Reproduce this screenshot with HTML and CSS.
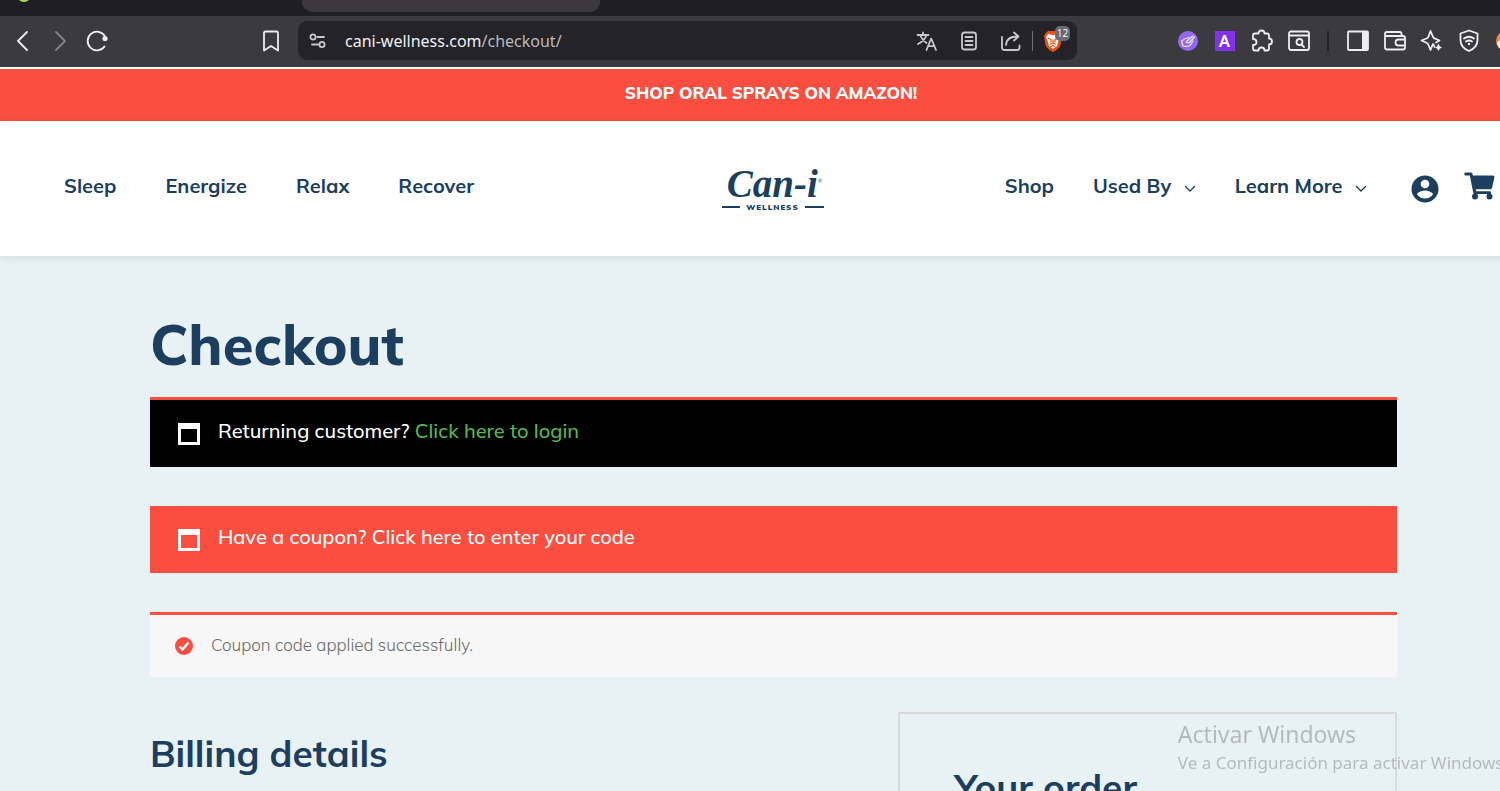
FILE: index.html
```html
<!DOCTYPE html>
<html lang="en">
<head>
    <meta charset="UTF-8">
    <meta name="viewport" content="width=device-width, initial-scale=1.0">
    <title>Checkout - Cani Wellness</title>
    <link rel="stylesheet" href="styles.css">
</head>
<body>
<div class="window">
    <!-- Browser chrome -->
    <div class="tab-strip">
        <span class="tab-favicon"></span>
        <span class="active-tab"></span>
    </div>
    <div class="toolbar">
        <div class="toolbar-nav">
            <button class="tool-btn" aria-label="Back">
                <svg width="24" height="24" viewBox="0 0 24 24"><path d="M16 3 L7 12 L16 21"/></svg>
            </button>
            <button class="tool-btn dim" aria-label="Forward">
                <svg width="24" height="24" viewBox="0 0 24 24"><path d="M8 3 L17 12 L8 21"/></svg>
            </button>
            <button class="tool-btn" aria-label="Reload">
                <svg width="24" height="24" viewBox="0 0 24 24"><path d="M19.500 17.500 A9.300 9.300 0 1 1 19.800 7"/><circle class="solid" cx="20" cy="9.500" r="2.600"/></svg>
            </button>
            <button class="tool-btn bookmark" aria-label="Bookmark">
                <svg width="24" height="24" viewBox="0 0 24 24"><path d="M5 4 Q5 2.500 6.500 2.500 H17.500 Q19 2.500 19 4 V21.500 L12 17 L5 21.500 Z"/></svg>
            </button>
        </div>
        <div class="url-bar">
            <button class="url-btn" aria-label="Site settings">
                <svg width="20" height="20" viewBox="0 0 20 20"><circle cx="5" cy="6" r="2.600"/><path d="M9.500 6 H16 M4 13.500 H10.500"/><circle cx="14" cy="13.500" r="2.600"/></svg>
            </button>
            <div class="url-text">cani-wellness.com<span>/checkout/</span></div>
            <button class="url-btn" aria-label="Translate">
                <svg width="22" height="22" viewBox="0 0 22 22"><path d="M1.500 5 H12.500 M7 2.500 V5 M10.500 5 Q8.500 11 2 14 M4 5 Q6 10 10.500 13 M10.500 20 L15.200 8.500 L20 20 M12 16.200 H18.500"/></svg>
            </button>
            <button class="url-btn" aria-label="Reader mode">
                <svg width="22" height="22" viewBox="0 0 22 22"><rect x="4" y="2.500" width="14" height="17" rx="2.500"/><path d="M7.500 7 H14.500 M7.500 11 H14.500 M7.500 15 H14.500"/></svg>
            </button>
            <button class="url-btn" aria-label="Share">
                <svg width="22" height="22" viewBox="0 0 22 22"><path d="M2 7 V17.500 Q2 20 4.500 20 H17 Q19.500 20 19.500 17.500 V15.500 M6 15 Q6.500 6.500 17.500 6.500 M14 2.500 L18.500 6.500 L14 10.500"/></svg>
            </button>
            <span class="url-divider"></span>
            <button class="url-btn shield" aria-label="Brave Shields">
                <svg width="20" height="24" viewBox="0 0 20 24"><path class="shield-body" d="M5 2 H15 L17.500 4.500 L19 7 L17.500 16 Q16 20 10 23 Q4 20 2.500 16 L1 7 L2.500 4.500 Z"/><path class="shield-face" d="M5 5 L10 6 L15 5 L17 8 L15 13 L14 17 L10 20 L6 17 L5 13 L3 8 Z"/><path class="shield-lines" d="M5 9 L8 10.500 L8 13 M15 9 L12 10.500 L12 13 M7.500 15 L10 14 L12.500 15 M10 14 V11 M8 17.500 L10 16.500 L12 17.500"/></svg>
                <span class="shield-count">12</span>
            </button>
        </div>
        <div class="toolbar-extensions">
            <button class="tool-btn" aria-label="Coupon extension">
                <svg width="24" height="24" viewBox="0 0 24 24"><circle class="ext-purple" cx="12" cy="12" r="10"/><path class="thin" d="M5.500 12 L7 17 Q10.500 18 14 16.500 L17 12 M5.500 12 Q9 9 13 8.500 M10 13 L13 14 L18.500 8 M11 12 L17 7"/></svg>
            </button>
            <button class="tool-btn" aria-label="Extension A">
                <span class="ext-letter">A</span>
            </button>
            <button class="tool-btn" aria-label="Extensions">
                <svg width="24" height="24" viewBox="0 0 24 24"><path d="M3 6.500 Q3 4.500 5 4.500 H8.500 Q8.500 1.500 11.500 1.500 Q14.500 1.500 14.500 4.500 H17 Q19 4.500 19 6.500 V9.500 Q22 9.500 22 12.500 Q22 15.500 19 15.500 V19.500 Q19 21.500 17 21.500 H14.500 Q14.500 18.500 11.500 18.500 Q8.500 18.500 8.500 21.500 H5 Q3 21.500 3 19.500 V16 Q6.500 16 6.500 13 Q6.500 10 3 10 Z"/></svg>
            </button>
            <button class="tool-btn" aria-label="Search page">
                <svg width="24" height="24" viewBox="0 0 24 24"><rect x="2" y="2.500" width="20" height="18.500" rx="2"/><path d="M2 6.500 H22 M14.500 15.500 L17 18"/><circle cx="12.500" cy="13" r="3"/></svg>
            </button>
            <span class="tool-divider"></span>
            <button class="tool-btn" aria-label="Sidebar">
                <svg width="24" height="24" viewBox="0 0 24 24"><rect x="2" y="2.500" width="20" height="18.500" rx="1"/><rect class="solid" x="16" y="2.500" width="6" height="18.500"/></svg>
            </button>
            <button class="tool-btn" aria-label="Wallet">
                <svg width="24" height="24" viewBox="0 0 24 24"><path d="M18.500 7 V4.500 Q18.500 3 17 3 H4 Q2 3 2 5 V18.500 Q2 20.500 4 20.500 H20 Q22 20.500 22 18.500 V9 Q22 7 20 7 H2.500 M22 10.500 H15.500 Q12.500 10.500 12.500 13.500 Q12.500 16.500 15.500 16.500 H22"/></svg>
            </button>
            <button class="tool-btn" aria-label="Leo AI">
                <svg width="24" height="24" viewBox="0 0 24 24"><path d="M14.500 18 L13.500 15.500 Q13 14.500 12.500 16 L10.500 21 L8.500 16 Q8 14.500 6.500 13.800 L1.500 11.500 L6.500 9.500 Q8 8.800 8.500 7.500 L10.500 2 L12.800 7.500 Q13.300 8.800 14.500 9.400 L19.500 11.500 L16 13.500"/><path class="solid" d="M18.500 14.500 L19.800 17.200 L22 18.500 L19.800 19.800 L18.500 22 L17.200 19.800 L15 18.500 L17.200 17.200 Z"/></svg>
            </button>
            <button class="tool-btn" aria-label="VPN">
                <svg width="24" height="24" viewBox="0 0 24 24"><path d="M12 1.500 L20.500 4.500 V11 Q20.500 18.500 12 22 Q3.500 18.500 3.500 11 V4.500 Z M7 9.500 Q12 6 17 9.500 M9 12.500 Q12 10.500 15 12.500"/><circle class="solid" cx="12" cy="15" r="1.200"/></svg>
            </button>
            <button class="tool-btn" aria-label="Profile">
                <svg width="24" height="24" viewBox="0 0 24 24"><circle class="avatar-bg" cx="12" cy="12" r="10"/><path class="avatar-mark" d="M3 14 L9 8 L16 19 Q9 23 4.500 18 Z"/></svg>
            </button>
        </div>
    </div>

    <!-- Store page -->
    <a href="#" class="promo">SHOP ORAL SPRAYS ON AMAZON!</a>

    <header class="header">
        <nav class="nav nav-left">
            <a href="#">Sleep</a>
            <a href="#">Energize</a>
            <a href="#">Relax</a>
            <a href="#">Recover</a>
        </nav>
        <a href="#" class="logo">
            <span class="logo-name">Can-i<sup>®</sup></span>
            <span class="logo-sub">WELLNESS</span>
        </a>
        <nav class="nav nav-right">
            <a href="#">Shop</a>
            <a href="#">Used By <svg class="chevron" width="12" height="8" viewBox="0 0 12 8"><path d="M1 1 L6 6 L11 1"/></svg></a>
            <a href="#">Learn More <svg class="chevron" width="12" height="8" viewBox="0 0 12 8"><path d="M1 1 L6 6 L11 1"/></svg></a>
            <a href="#" class="account" aria-label="My account">
                <svg width="28" height="28" viewBox="0 0 28 28"><circle cx="14" cy="14" r="13.500"/><circle class="cutout" cx="14" cy="9" r="4.300"/><path class="cutout" d="M5.800 19 Q9 15.500 14 15.500 Q19 15.500 22.200 19 Q19 23.500 14 23.500 Q9 23.500 5.800 19 Z"/></svg>
            </a>
            <a href="#" class="cart" aria-label="Cart">
                <svg width="31" height="28" viewBox="0 0 31 28"><path d="M1.500 0.500 H7 Q8.200 0.500 8.500 1.700 L8.900 3.500 H29 Q30.800 3.500 30.400 5.200 L28 16 Q27.700 17.300 26.300 17.300 H11.800 L12.200 19.300 H26 Q27.300 19.300 27 20.800 L26.800 22 H10.500 Q9.500 22 9.300 21 L5.800 3.500 H1.500 Q0.300 3.500 0.300 2 Q0.300 0.500 1.500 0.500 Z"/><circle cx="11" cy="24.500" r="3"/><circle cx="25.500" cy="24.500" r="3"/></svg>
            </a>
        </nav>
    </header>

    <main class="content">
        <h1>Checkout</h1>

        <div class="notice notice-login">
            <svg width="22" height="22" viewBox="0 0 22 22"><path d="M0 0 H22 V22 H0 Z M3 6 V19 H19 V6 Z"/></svg>
            <p>Returning customer? <a href="#">Click here to login</a></p>
        </div>
        <div class="notice notice-coupon">
            <svg width="22" height="22" viewBox="0 0 22 22"><path d="M0 0 H22 V22 H0 Z M3 6 V19 H19 V6 Z"/></svg>
            <p>Have a coupon? <a href="#">Click here to enter your code</a></p>
        </div>
        <div class="notice notice-success">
            <svg width="18" height="18" viewBox="0 0 18 18"><circle cx="9" cy="9" r="9"/><path d="M4.500 9.500 L7.500 12.500 L13.500 5.500"/></svg>
            <p>Coupon code applied successfully.</p>
        </div>

        <div class="checkout-columns">
            <h2>Billing details</h2>
            <section class="order-box">
                <h2>Your order</h2>
            </section>
        </div>
    </main>
</div>

<div class="watermark">
    <div class="watermark-title">Activar Windows</div>
    <div class="watermark-text">Ve a Configuración para activar Windows.</div>
</div>
</body>
</html>
```
FILE: styles.css
```css
:root {
    --navy: #1c3f60;
    --red: #fa4e41;
    --background: #e8f1f4;
    --overflow: 47px;
}

* {
    box-sizing: border-box;
    margin: 0;
    padding: 0;
}

html,
body {
    height: 100%;
    overflow: hidden;
}

body {
    background: var(--background);
    color: var(--navy);
    font-family: Mulish, "Open Sans", sans-serif;
}

a {
    color: inherit;
    text-decoration: none;
}

button {
    background: none;
    border: none;
    cursor: pointer;
}

/* the browser window runs past the right edge of the screen */
.window {
    margin-right: calc(-1 * var(--overflow));
}

/* Browser chrome */
.tab-strip {
    display: flex;
    height: 16px;
    background: #201e25;
}

.tab-favicon {
    width: 14px;
    height: 14px;
    margin: -12px 0 0 17px;
    border-radius: 50%;
    background: #a5e34b;
}

.active-tab {
    width: 298px;
    height: 12px;
    margin-left: 271px;
    border-radius: 0 0 10px 10px;
    background: #3b393f;
}

.toolbar {
    display: grid;
    grid-template-columns: 294px 1fr 470px;
    height: 53px;
    padding: 5px 0 7px 4px;
    border-bottom: 2px solid #fff;
    background: #3b3a3f;
}

.toolbar svg {
    fill: none;
    stroke: #eeedf1;
    stroke-width: 1.8;
    stroke-linecap: round;
    stroke-linejoin: round;
}

.toolbar .solid {
    fill: #eeedf1;
    stroke: none;
}

.toolbar-nav,
.toolbar-extensions {
    display: flex;
    align-items: center;
}

.tool-btn {
    display: flex;
    justify-content: center;
    width: 37px;
}

.tool-btn.dim {
    opacity: 0.4;
}

.bookmark {
    margin: 0 9px 0 auto;
}

.url-bar {
    display: flex;
    align-items: center;
    gap: 20px;
    height: 39px;
    padding: 0 18px 0 10px;
    border-radius: 9px;
    background: #242328;
}

.url-bar svg {
    display: block;
    stroke: #c9c8cd;
}

.url-text {
    flex: 1;
    margin-left: -3px;
    color: #f0eff3;
    font-family: "Segoe UI", "Noto Sans", sans-serif;
    font-size: 16px;
}

.url-text span {
    color: #bab9be;
}

.url-divider {
    width: 1px;
    height: 20px;
    margin: 0 -10px;
    background: #6d6c72;
}

.shield {
    position: relative;
    margin-right: -4px;
}

.url-bar .shield-body {
    fill: #f0500f;
    stroke: none;
}

.url-bar .shield-face {
    fill: #fff;
    stroke: none;
}

.url-bar .shield-lines {
    stroke: #f0500f;
    stroke-width: 1.2;
}

.shield-count {
    position: absolute;
    top: -3px;
    left: 12px;
    width: 15px;
    height: 15px;
    border-radius: 5px;
    background: #666b78;
    color: #fff;
    font: 10px/15px "Open Sans", sans-serif;
    text-align: center;
}

.toolbar-extensions {
    padding-left: 92px;
}

.toolbar .ext-purple {
    fill: #9467f5;
    stroke: none;
}

.toolbar .thin {
    stroke-width: 1.2;
}

.ext-letter {
    width: 20px;
    height: 20px;
    background: #832fec;
    color: #fff;
    font: 600 17px/20px Roboto, sans-serif;
}

.tool-divider {
    width: 2px;
    height: 20px;
    margin: 0 10px;
    background: #242328;
}

.toolbar .avatar-bg {
    fill: #f08a3c;
    stroke: none;
}

.toolbar .avatar-mark {
    fill: #fff;
    stroke: none;
}

/* Store header */
.promo {
    display: block;
    height: 52px;
    padding-right: 5px;
    background: var(--red);
    color: #fff;
    font-size: 17px;
    font-weight: 800;
    line-height: 48px;
    text-align: center;
}

.header {
    display: grid;
    grid-template-columns: 1fr auto 1fr;
    align-items: center;
    height: 135px;
    padding: 0 52px;
    background: #fff;
    box-shadow: 0 1px 10px rgba(0, 0, 0, 0.1);
}

.nav {
    display: flex;
    align-items: center;
    font-size: 20px;
    font-weight: 700;
    line-height: 28px;
    padding-bottom: 6px;
}

.nav-left {
    gap: 49px;
    padding-left: 12px;
}

.nav-right {
    justify-content: flex-end;
    gap: 39px;
}

.chevron {
    margin-left: 7px;
    fill: none;
    stroke: var(--navy);
    stroke-width: 1.3;
}

.account,
.cart {
    display: flex;
    fill: var(--navy);
}

.account {
    margin: 6px -14px 0 5px;
}

.account .cutout {
    fill: #fff;
}

.logo {
    display: flex;
    flex-direction: column;
    align-items: center;
    width: 104px;
    padding-right: 2px;
}

.logo-name {
    padding-left: 4px;
    font: italic bold 39px/36px "Liberation Serif", serif;
    white-space: nowrap;
}

.logo-name sup {
    font: 6px/6px "Liberation Sans", sans-serif;
    vertical-align: 14px;
}

.logo-sub {
    display: flex;
    align-items: center;
    gap: 6px;
    width: 100%;
    font: 900 8px/10px Mulish, sans-serif;
    letter-spacing: 1px;
}

.logo-sub::before,
.logo-sub::after {
    content: "";
    flex: 1;
    height: 2px;
    background: var(--navy);
}

/* Checkout */
.content {
    padding: 52px 150px 0;
}

h1 {
    margin-bottom: 17px;
    font-size: 56px;
    font-weight: 800;
    line-height: 72px;
}

h2 {
    font-size: 37px;
    font-weight: 700;
    line-height: 46px;
}

.notice {
    display: flex;
    align-items: center;
    gap: 18px;
    margin-bottom: 39px;
    padding: 0 28px;
    font-size: 20px;
    font-weight: 500;
}

.notice p {
    padding-bottom: 6px;
}

.notice-login {
    height: 70px;
    border-top: 3px solid var(--red);
    background: #000;
    color: #fff;
    fill: #fff;
}

.notice-login a {
    color: #53b951;
}

.notice-coupon {
    height: 67px;
    background: var(--red);
    color: #fff;
    fill: #fff;
}

.notice-success {
    height: 65px;
    margin-bottom: 35px;
    padding: 0 25px;
    border-top: 3px solid var(--red);
    background: #f7f7f7;
    color: #6a6a6a;
    font-size: 17px;
    font-weight: 300;
}

.notice-success p {
    padding-bottom: 4px;
}

.notice-success circle {
    fill: var(--red);
}

.notice-success path {
    fill: none;
    stroke: #fff;
    stroke-width: 2.4;
}

.checkout-columns {
    display: grid;
    grid-template-columns: 3fr 2fr;
}

.checkout-columns > h2 {
    padding-top: 18px;
}

.order-box {
    padding: 50px 54px;
    border: 2px solid #dadada;
}

/* Desktop watermark over the page */
.watermark {
    position: fixed;
    right: -8px;
    bottom: 15px;
    color: #b5babc;
    font-family: "Segoe UI", "Noto Sans", sans-serif;
    white-space: nowrap;
}

.watermark-title {
    font-size: 23px;
    line-height: 32px;
}

.watermark-text {
    font-size: 17px;
    line-height: 26px;
}
```
